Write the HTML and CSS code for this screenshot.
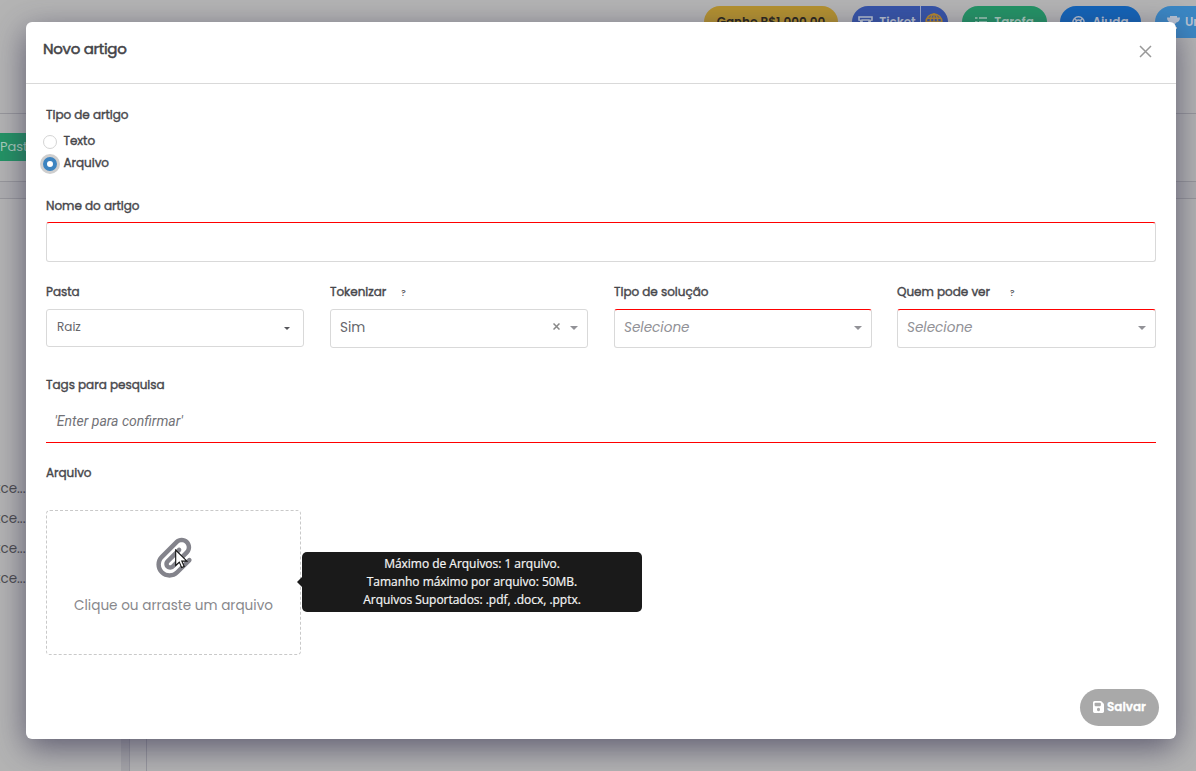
FILE: index.html
```html
<!DOCTYPE html>
<html lang="pt-BR">
<head>
<meta charset="utf-8">
<title>Novo artigo</title>
<link rel="stylesheet" href="styles.css">
</head>
<body>
<div class="app">
  <div class="topbar">
    <div class="pill gold"><span>Ganho R$1.000,00</span></div>
    <div class="pill indigo">
      <svg width="15" height="12" viewBox="0 0 15 12" fill="none" stroke="currentColor" stroke-width="1.6"><path d="M1 1h13v3a2 2 0 0 0 0 4v3H1V8a2 2 0 0 0 0-4zM4 4h7v4H4z"/></svg>
      <span>Ticket</span>
      <svg class="globe" width="18" height="18" viewBox="0 0 17 17" fill="none" stroke="#b8892d" stroke-width="1.4"><circle cx="8.5" cy="8.5" r="7.5"/><ellipse cx="8.5" cy="8.5" rx="3.5" ry="7.5"/><path d="M1 8.5h15M2 5h13M2 12h13M8.5 1v15"/></svg>
    </div>
    <div class="pill green">
      <svg width="12" height="12" viewBox="0 0 12 12" fill="none" stroke="currentColor" stroke-width="1.7"><path d="M0 2h2.5M4 2h8M0 6h2.5M4 6h8M0 10h2.5M4 10h8"/></svg>
      <span>Tarefa</span>
    </div>
    <div class="pill blue">
      <svg width="13" height="13" viewBox="0 0 13 13" fill="none" stroke="currentColor" stroke-width="1.5"><circle cx="6.5" cy="6.5" r="5.7"/><circle cx="6.5" cy="6.5" r="2.5"/><path d="M2.5 2.5l2.3 2.3M10.5 2.5L8.2 4.8M2.5 10.5l2.3-2.3M10.5 10.5L8.2 8.2"/></svg>
      <span>Ajuda</span>
    </div>
    <div class="pill sky">
      <svg width="13" height="13" viewBox="0 0 13 13" fill="currentColor"><path d="M3 0h7v1.5h3c0 3-1.5 4.5-3.7 5C8.7 7.5 8 8 7.5 8.3V11H10v2H3v-2h2.5V8.3C5 8 4.3 7.5 3.7 6.5 1.500 6 0 4.500 0 1.500h3z"/></svg>
      <span>Un</span>
    </div>
  </div>
  <div class="crumbs"></div>
  <div class="tools"><div class="folder-btn">Past</div></div>
  <div class="strip"></div>
  <div class="workspace">
    <div class="tree">
      <div>xce...</div><div>xce...</div><div>xce...</div><div>xce...</div>
    </div>
    <div class="scroll"></div>
    <div class="splitter"></div>
  </div>
</div>

<div class="modal">
  <div class="modal-head">
    <h1>Novo artigo</h1>
    <svg class="close" width="13" height="13" viewBox="0 0 13 13" stroke="#999" stroke-width="1.5"><path d="M1 1l11 11M12 1L1 12"/></svg>
  </div>
  <div class="modal-body">
    <div class="label type-label">Tipo de artigo</div>
    <div class="option"><i class="radio"></i><span class="label">Texto</span></div>
    <div class="option"><i class="radio on"></i><span class="label">Arquivo</span></div>
    <div class="label name-label">Nome do artigo</div>
    <div class="input required"></div>
    <div class="grid">
      <div>
        <div class="field-head"><span class="label">Pasta</span></div>
        <div class="select short"><span class="small">Raiz</span><i class="caret tiny"></i></div>
      </div>
      <div>
        <div class="field-head"><span class="label">Tokenizar</span><b class="help">?</b></div>
        <div class="select"><span>Sim</span>
          <svg class="clear" width="7" height="7" viewBox="0 0 7 7" stroke="#888" stroke-width="1.5"><path d="M.5.5l6 6M6.5.5l-6 6"/></svg><i class="caret"></i></div>
      </div>
      <div>
        <div class="field-head"><span class="label">Tipo de solução</span></div>
        <div class="select required"><em>Selecione</em><i class="caret"></i></div>
      </div>
      <div>
        <div class="field-head"><span class="label">Quem pode ver</span><b class="help far">?</b></div>
        <div class="select required"><em>Selecione</em><i class="caret"></i></div>
      </div>
    </div>
    <div class="label tags-label">Tags para pesquisa</div>
    <div class="tags">'Enter para confirmar'</div>
    <div class="label file-label">Arquivo</div>
    <div class="drop">
      <svg width="36" height="41" viewBox="0 0 448 512" fill="#83838b"><path d="M364.2 83.8c-24.4-24.4-64-24.4-88.4 0l-184 184c-42.1 42.1-42.1 110.3 0 152.4s110.3 42.1 152.4 0l152-152c10.9-10.9 28.7-10.9 39.6 0s10.9 28.7 0 39.6l-152 152c-64 64-167.6 64-231.6 0s-64-167.6 0-231.6l184-184c46.3-46.3 121.3-46.3 167.6 0s46.3 121.3 0 167.6l-176 176c-28.6 28.6-75 28.6-103.6 0s-28.6-75 0-103.6l144-144c10.9-10.9 28.7-10.9 39.6 0s10.9 28.7 0 39.6l-144 144c-6.7 6.7-6.7 17.7 0 24.4s17.7 6.7 24.4 0l176-176c24.4-24.4 24.4-64 0-88.4z"/></svg>
      <span>Clique ou arraste um arquivo</span>
      <svg class="cursor" width="13" height="20" viewBox="0 0 13 20"><path d="M.7 1v15.5l3.6-3.4 2.4 5.5 2.5-1.1-2.4-5.4h5.1z" fill="#fff" stroke="#111" stroke-width="1.1"/></svg>
      <div class="tooltip"><div>Máximo de Arquivos: 1 arquivo.</div><div>Tamanho máximo por arquivo: 50MB.</div><div>Arquivos Suportados: .pdf, .docx, .pptx.</div></div>
    </div>
  </div>
  <div class="modal-foot">
    <div class="save"><svg width="11" height="12" viewBox="0 32 448 448" preserveAspectRatio="none" fill="#fff"><path d="M64 32C28.7 32 0 60.7 0 96V416c0 35.3 28.7 64 64 64H384c35.3 0 64-28.7 64-64V173.3c0-17-6.7-33.3-18.7-45.3L352 50.7C340 38.7 323.7 32 306.7 32H64zm0 96c0-17.7 14.3-32 32-32H288c17.7 0 32 14.3 32 32v64c0 17.7-14.3 32-32 32H96c-17.7 0-32-14.3-32-32V128zM224 288a64 64 0 1 1 0 128 64 64 0 1 1 0-128z"/></svg><span>Salvar</span></div>
  </div>
</div>
</body>
</html>
```

FILE: styles.css
```css
* { box-sizing: border-box; }
body {
  margin: 0;
  width: 1196px;
  height: 771px;
  overflow: hidden;
  background: #b4b4b4;
  font-family: Poppins, Inter, sans-serif;
  color: #47474b;
}

/* page behind the dialog */
.app { height: 771px; display: flex; flex-direction: column; overflow: hidden; }
.topbar {
  height: 44px;
  padding: 6px 0 0 704px;
  display: flex;
  gap: 14px;
  overflow: hidden;
}
.pill {
  height: 32px;
  flex: none;
  border-radius: 16px;
  display: flex;
  align-items: center;
  justify-content: center;
  gap: 6px;
  font-size: 12px;
  font-weight: 600;
  color: #b9c3d2;
}
.gold { width: 134px; background: #b5922f; color: #29251b; }
.indigo { width: 96px; background: #3654a8; padding-left: 1px; }
.indigo span { border-right: 1px solid #9aa6c8; padding-right: 4px; line-height: 32px; }
.indigo .globe { margin-left: -2px; }
.green { width: 85px; background: #239465; color: #a9cdbd; gap: 7px; }
.blue { width: 81px; background: #1364b8; margin-left: -1px; gap: 7px; }
.sky { width: 130px; background: #3b87c4; justify-content: flex-start; padding-left: 12px; gap: 5px; }
.crumbs { height: 70px; border-bottom: 1px solid #98989c; }
.tools { height: 68px; padding-top: 19px; border-bottom: 1px solid #98989c; }
.folder-btn {
  width: 60px;
  height: 28px;
  background: #239465;
  color: #a9cdbd;
  font-size: 13px;
  line-height: 28px;
}
.strip { height: 17px; border-bottom: 1px solid #98989c; background: #aeaeb0; }
.workspace { flex: 1; display: flex; }
.tree { width: 121px; padding-top: 275px; font-size: 13.5px; line-height: 30px; color: #4b4b4e; }
.tree div { margin-left: -6px; }
.scroll { width: 8px; background: #a6a6a9; }
.splitter { width: 18px; border: solid #98989e; border-width: 0 1px; }

/* dialog */
.modal {
  position: absolute;
  left: 26px;
  top: 22px;
  width: 1150px;
  height: 717px;
  background: #fff;
  border-radius: 6px;
  box-shadow: 0 9px 32px rgba(47, 45, 75, .65);
  display: flex;
  flex-direction: column;
}
.modal-head {
  height: 62px;
  flex: none;
  border-bottom: 1px solid #d9d9d9;
  padding: 18px 24px 0 17px;
  display: flex;
  justify-content: space-between;
}
h1 {
  margin: 0;
  font-size: 15px;
  line-height: 18px;
  font-weight: 400;
  letter-spacing: -.3px;
  -webkit-text-stroke: .5px currentColor;
  color: #434347;
}
.close { margin-top: 5px; }
.modal-body { padding: 22px 20px 0; flex: 1; }
.label {
  font-size: 12px;
  line-height: 18px;
  font-weight: 400;
  letter-spacing: -.03px;
  -webkit-text-stroke: .4px currentColor;
  white-space: nowrap;
}
.type-label { margin-bottom: 6px; }
.option { height: 22px; display: flex; align-items: center; gap: 6.5px; margin-left: -3px; }
.option .label { margin-top: -1px; }
.radio { width: 14px; height: 14px; margin-top: 1px; border: 1px solid #d4d4d4; border-radius: 50%; }
.radio.on { border: 4px solid #3b83c0; background: #fff; box-shadow: 0 0 0 3px #cecece; }
.name-label { margin-top: 23px; }
.input { height: 40px; margin-top: 7px; border: 1px solid #d9d9d9; border-radius: 3px; }
.input.required, .select.required { border-top-color: #f00; }
.grid { display: grid; grid-template-columns: 258px 258px 258px 259px; column-gap: 26px; margin-top: 21px; height: 65px; width: 1111px; }
.grid > div:nth-child(4) { margin-left: -1px; width: 259px; }
.field-head { display: flex; align-items: center; height: 18px; margin-bottom: 8px; }
.help { font-size: 8.5px; font-weight: 500; margin: 2px 0 0 15px; }
.help.far { margin-left: 20px; }
.select {
  height: 39px;
  border: 1px solid #d9d9d9;
  border-radius: 3px;
  display: flex;
  align-items: center;
  padding: 0 9px;
  font-size: 13.6px;
  color: #66666b;
}
.select.short { height: 38px; }
.select > :first-child { flex: 1; margin-top: -2px; }
.select em { color: #919196; }
.select .small { font-size: 12px; padding-left: 1px; }
.clear { margin: -4px 10px 0 0; }
.caret { border: 4px solid transparent; border-top-color: #929297; border-bottom: 0; margin-top: -1px; }
.caret.tiny { border-width: 3px 3px 0; border-top-color: #55555a; margin: 0 4px 0 0; }
.tags-label { margin-top: 28px; }
.tags {
  height: 49px;
  border-bottom: 1px solid #f00;
  padding: 18px 0 0 8.5px;
  font: italic 14px/18px Roboto, sans-serif;
  color: #727277;
}
.file-label { margin-top: 21px; }
.drop {
  position: relative;
  width: 255px;
  height: 145px;
  margin-top: 28px;
  border: 1px dashed #c9c9c9;
  border-radius: 4px;
  display: flex;
  flex-direction: column;
  align-items: center;
  padding-top: 26px;
}
.drop > span { margin-top: 19px; font-size: 13.6px; line-height: 18px; color: #88888c; white-space: nowrap; }
.cursor { position: absolute; left: 128px; top: 38px; }
.tooltip {
  position: absolute;
  left: 255px;
  top: 41px;
  width: 340px;
  height: 60px;
  background: #1a1a1a;
  border-radius: 5px;
  padding-top: 3px;
  text-align: center;
  color: #f5f5f5;
  font: 12px/18px "Open Sans", "Noto Sans", sans-serif;
  letter-spacing: -.03px;
  -webkit-text-stroke: .2px currentColor;
}
.tooltip::before {
  content: "";
  position: absolute;
  left: -5px;
  top: 25px;
  border: 5px solid transparent;
  border-right-color: #1a1a1a;
  border-left: 0;
}
.modal-foot { display: flex; justify-content: flex-end; padding: 0 17px 13px; }
.save {
  width: 79px;
  height: 37px;
  border-radius: 19px;
  background: #a9a9a9;
  color: #fff;
  display: flex;
  align-items: center;
  justify-content: center;
  gap: 3px;
  font-size: 12px;
  font-weight: 600;
  -webkit-text-stroke: .3px currentColor;
  padding-bottom: 2px;
}
```
